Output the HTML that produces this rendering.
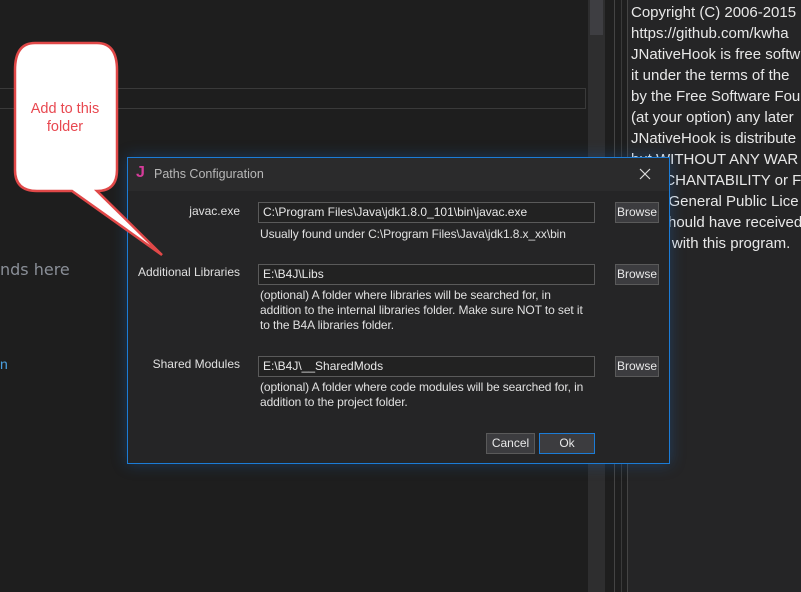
<!DOCTYPE html>
<html><head><style>
body{margin:0;width:801px;height:592px;background:#1e1e1e;position:relative;overflow:hidden;font-family:"Liberation Sans",sans-serif;}
.abs{position:absolute}
.rt{left:628px;top:0;width:173px;height:592px;background:#252526;}
.rt div{position:absolute;left:3px;white-space:nowrap;color:#e8e8e8;font-size:15px;}
.dlg{left:127px;top:157px;width:541px;height:305px;border:1px solid #1c7cd6;background:#252526;box-shadow:0 0 14px rgba(30,110,200,.35);}
.tb{left:0;top:0;width:541px;height:33px;background:#2b2b2c;}
.lbl{color:#e0e0e0;font-size:12px;text-align:right;width:112px;left:0}
.inp{left:130px;border:1px solid #5a5a5a;background:#222;color:#e8e8e8;font-size:12px;line-height:19px;padding-left:4px;box-sizing:border-box;width:337px;height:21px}
.br{left:487px;width:44px;height:21px;background:#3c3c3f;border:1px solid #5a5a5a;color:#e8e8e8;font-size:12px;line-height:19px;text-align:center;box-sizing:border-box}
.hint{left:132px;color:#e0e0e0;font-size:12px;line-height:15px;width:336px;letter-spacing:-0.1px}
</style></head><body>
<div class="abs" style="left:0;top:88px;width:586px;height:21px;border:1px solid #3a3a3a;border-left:none;box-sizing:border-box"></div>
<div class="abs" style="left:0;top:260px;color:#8a8f98;font-size:16px;font-family:'DejaVu Sans',sans-serif">nds here</div>
<div class="abs" style="left:0;top:356px;color:#4aa0e0;font-size:14px">n</div>
<div class="abs" style="left:588px;top:0;width:17px;height:592px;background:#2e2e2f"></div>
<div class="abs" style="left:590px;top:0;width:13px;height:35px;background:#3e3e42"></div>
<div class="abs" style="left:614px;top:0;width:1px;height:592px;background:#444"></div>
<div class="abs" style="left:621px;top:0;width:1px;height:592px;background:#3a3a3a"></div>
<div class="abs" style="left:627px;top:0;width:1px;height:592px;background:#444"></div>
<div class="abs rt">
<div style="top:4px">Copyright (C) 2006-2015</div>
<div style="top:25px">https://github.com/kwha</div>
<div style="top:46px">JNativeHook is free softw</div>
<div style="top:67px">it under the terms of the</div>
<div style="top:88px">by the Free Software Fou</div>
<div style="top:109px">(at your option) any later</div>
<div style="top:130px">JNativeHook is distribute</div>
<div style="top:151px">but WITHOUT ANY WAR</div>
<div style="top:172px">MERCHANTABILITY or FI</div>
<div style="top:193px">GNU General Public Lice</div>
<div style="top:214px">You should have received</div>
<div style="top:235px">along with this program.</div>
</div>
<div class="abs dlg">
<div class="abs tb">
<div class="abs" style="left:8px;top:6px;color:#d63c9a;font-weight:bold;font-size:16px">J</div>
<div class="abs" style="left:26px;top:9px;color:#b8b8b8;font-size:12.5px">Paths Configuration</div>
<svg class="abs" style="left:511px;top:10px" width="12" height="12"><path d="M1,1 L11,11 M11,1 L1,11" stroke="#ddd" stroke-width="1.2"/></svg>
</div>
<div class="abs lbl" style="top:46px">javac.exe</div>
<div class="abs inp" style="top:44px">C:\Program Files\Java\jdk1.8.0_101\bin\javac.exe</div>
<div class="abs br" style="top:44px">Browse</div>
<div class="abs hint" style="top:69px">Usually found under C:\Program Files\Java\jdk1.8.x_xx\bin</div>
<div class="abs lbl" style="top:107px">Additional Libraries</div>
<div class="abs inp" style="top:106px">E:\B4J\Libs</div>
<div class="abs br" style="top:106px">Browse</div>
<div class="abs hint" style="top:130px">(optional) A folder where libraries will be searched for, in<br>addition to the internal libraries folder. Make sure NOT to set it<br>to the B4A libraries folder.</div>
<div class="abs lbl" style="top:199px">Shared Modules</div>
<div class="abs inp" style="top:198px">E:\B4J\__SharedMods</div>
<div class="abs br" style="top:198px">Browse</div>
<div class="abs hint" style="top:222px">(optional) A folder where code modules will be searched for, in<br>addition to the project folder.</div>
<div class="abs br" style="left:358px;top:275px;width:49px">Cancel</div>
<div class="abs br" style="left:411px;top:275px;width:56px;border-color:#1c7cd6">Ok</div>
</div>
<svg class="abs" style="left:0;top:0;z-index:5" width="200" height="270">
<path d="M35,43 H97 Q117,43 117,70 V170 Q117,191 97,191 L162,255 L72,191 H37 Q15,191 15,170 V70 Q15,43 35,43 Z" fill="#fff" stroke="#e04848" stroke-width="2.5" stroke-linejoin="miter"/>
<text x="65" y="113" fill="#e84850" font-size="14.5" text-anchor="middle" font-family="Liberation Sans">Add to this</text>
<text x="65" y="131" fill="#e84850" font-size="14.5" text-anchor="middle" font-family="Liberation Sans">folder</text>
</svg>
</body></html>
